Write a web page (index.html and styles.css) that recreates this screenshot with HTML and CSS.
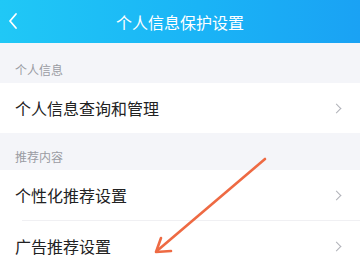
FILE: index.html
```html
<!DOCTYPE html>
<html lang="zh">
<head>
<meta charset="utf-8">
<link rel="stylesheet" href="styles.css">
</head>
<body>
<div class="page">
  <header class="bar">
    <svg class="back" width="12" height="18" viewBox="0 0 12 18"><path d="M9 2 L3 9 L9 16" fill="none" stroke="#fff" stroke-width="1.8" stroke-linecap="round" stroke-linejoin="round"/></svg>
    <div class="title">个人信息保护设置</div>
  </header>
  <div class="section first">个人信息</div>
  <div class="row"><span>个人信息查询和管理</span><i class="chev"></i></div>
  <div class="section second">推荐内容</div>
  <div class="row"><span>个性化推荐设置</span><i class="chev"></i></div>
  <div class="row divided tall"><span>广告推荐设置</span><i class="chev"></i></div>
  <svg class="arrow" width="360" height="270" viewBox="0 0 360 270">
    <path d="M265 159 L158 250" fill="none" stroke="#ee6a43" stroke-width="2.6" stroke-linecap="round"/>
    <path d="M171 251 L156 252 L161 238" fill="none" stroke="#ee6a43" stroke-width="2.6" stroke-linecap="round" stroke-linejoin="round"/>
  </svg>
</div>
</body>
</html>
```
FILE: styles.css
```css
html, body {
  margin: 0;
  padding: 0;
  background: #f4f5f9;
}
.page {
  position: relative;
  width: 360px;
  height: 270px;
  overflow: hidden;
  font-family: "Noto Sans CJK SC", "Noto Sans", sans-serif;
}
.bar {
  height: 43px;
  background: linear-gradient(90deg, #20c8f6 0%, #1ab4f6 55%, #1aa2f4 100%);
  display: flex;
  align-items: center;
  justify-content: center;
  position: relative;
}
.back {
  position: absolute;
  left: 7px;
  top: 12px;
}
.title {
  color: #fff;
  font-size: 16px;
}
.section {
  box-sizing: border-box;
  padding: 0 0 5px 15px;
  display: flex;
  align-items: flex-end;
  font-size: 12px;
  color: #9a9ca3;
}
.section.first {
  height: 40px;
}
.section.second {
  height: 37px;
}
.row {
  height: 50px;
  background: #fff;
  display: flex;
  align-items: center;
  justify-content: space-between;
  padding: 0 20px 0 15px;
  font-size: 16px;
  color: #222;
  position: relative;
}
.row.tall {
  height: 52px;
}
.row.divided::before {
  content: "";
  position: absolute;
  left: 22px;
  right: 0;
  top: 0;
  height: 1px;
  background: #f0f0f3;
}
.chev {
  width: 6px;
  height: 6px;
  border-top: 1.3px solid #b0b2b8;
  border-right: 1.3px solid #b0b2b8;
  transform: rotate(45deg);
}
.arrow {
  position: absolute;
  left: 0;
  top: 0;
}
```
